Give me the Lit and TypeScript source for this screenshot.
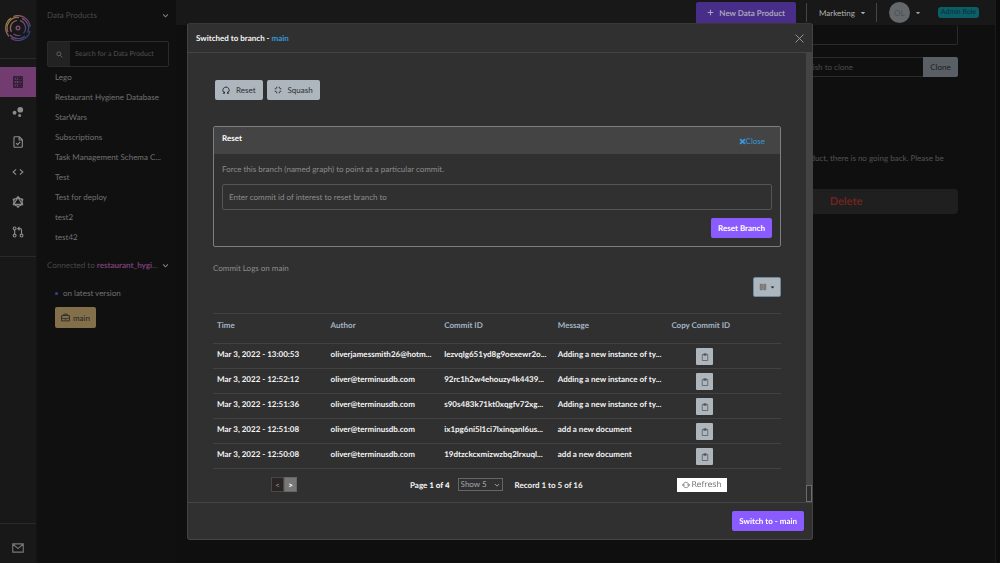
import { LitElement, html, css, svg } from "lit";
import { customElement, property } from "lit/decorators.js";

interface Commit {
  time: string;
  author: string;
  id: string;
  message: string;
}

const PRODUCTS = [
  "Lego",
  "Restaurant Hygiene Database",
  "StarWars",
  "Subscriptions",
  "Task Management Schema C...",
  "Test",
  "Test for deploy",
  "test2",
  "test42",
];

const COMMITS: Commit[] = [
  { time: "Mar 3, 2022 - 13:00:53", author: "oliverjamessmith26@hotm...", id: "lezvqlg651yd8g9oexewr2o...", message: "Adding a new instance of ty..." },
  { time: "Mar 3, 2022 - 12:52:12", author: "oliver@terminusdb.com", id: "92rc1h2w4ehouzy4k4439...", message: "Adding a new instance of ty..." },
  { time: "Mar 3, 2022 - 12:51:36", author: "oliver@terminusdb.com", id: "s90s483k71kt0xqgfv72xg...", message: "Adding a new instance of ty..." },
  { time: "Mar 3, 2022 - 12:51:08", author: "oliver@terminusdb.com", id: "ix1pg6ni5l1ci7lxinqanl6us...", message: "add a new document" },
  { time: "Mar 3, 2022 - 12:50:08", author: "oliver@terminusdb.com", id: "19dtzckcxmizwzbq2lrxuql...", message: "add a new document" },
];

const ICONS: Record<string, unknown> = {
  table: svg`<path d="M2.5 1.200h11v13.600h-11zM2.5 5.700h11M2.5 10.300h11M5 3.500h1.500M8 3.500h4M5 8h1.500M8 8h4M5 12.500h1.500M8 12.500h4"/>`,
  bubbles: svg`<g fill="currentColor" stroke="none"><circle cx="11" cy="5" r="3.8"/><circle cx="3.4" cy="9" r="2.6"/><circle cx="10.2" cy="12.8" r="2"/></g>`,
  doc: svg`<path d="M3.8 1h6l4 4v8.8a1.2 1.2 0 0 1-1.200 1.200H3.800a1.200 1.200 0 0 1-1.200-1.200V2.200A1.200 1.200 0 0 1 3.800 1zM9.500 1v4.300h4.200M5.500 9.500l2 2 3.400-3.600"/>`,
  code: svg`<path d="M5.500 4.500 1.500 8l4 3.500M10.500 4.500l4 3.500-4 3.500"/>`,
  graph: svg`<path d="M8 1.800l5.600 3.100v6.200L8 14.200l-5.600-3.100V4.900zM8 1.800l-5.600 9.300h11.200z"/><g fill="currentColor" stroke="none"><circle cx="8" cy="1.700" r="1.500"/><circle cx="13.600" cy="4.900" r="1.500"/><circle cx="13.600" cy="11.100" r="1.500"/><circle cx="8" cy="14.300" r="1.500"/><circle cx="2.400" cy="11.100" r="1.500"/><circle cx="2.400" cy="4.900" r="1.500"/></g>`,
  pull: svg`<circle cx="3.500" cy="3.300" r="1.900"/><circle cx="3.500" cy="12.700" r="1.900"/><circle cx="12.700" cy="12.700" r="1.900"/><path d="M3.500 5.200v5.600M12.700 10.800V5.300a1.800 1.800 0 0 0-1.800-1.800H8M10 1.200 7.700 3.500 10 5.800"/>`,
  mail: svg`<path d="M1 2.500h14v11H1zM1.500 3l6.500 5.800L14.500 3"/>`,
  search: svg`<circle cx="6.500" cy="6.500" r="4.500"/><path d="M10 10l4.500 4.500"/>`,
  chevron: svg`<path d="M2.500 5.500 8 11l5.500-5.500"/>`,
  caret: svg`<path d="M2 5h12l-6 6.500z" fill="currentColor" stroke="none"/>`,
  plus: svg`<path d="M8 1.500v13M1.500 8h13"/>`,
  close: svg`<path d="M1 1l14 14M15 1 1 15"/>`,
  cross: svg`<path d="M2.500 2.500l11 11M13.500 2.500l-11 11"/>`,
  briefcase: svg`<path d="M1 4.500h14v9.500H1zM5 4.500V2h6v2.500M1 8.500c4.500 2.500 9.500 2.500 14 0M8 9v2.500"/>`,
  undo: svg`<path d="M5 14.500H1.800M5 14.500V11.500M5 14A6.300 6.300 0 1 1 11 14M11 14.500h3.200M11 14.500v-3"/>`,
  squash: svg`<path d="M5.500 1.500v3M1.500 5.500h3M10.500 1.500v3M11.500 5.500h3M5.500 14.500v-3M1.500 10.500h3M10.500 14.500v-3M11.500 10.500h3"/>`,
  columns: svg`<path d="M2.500 2.500h4v11h-4zM9.500 2.500h4v11h-4z" fill="currentColor" fill-opacity="0.600"/>`,
  clipboard: svg`<path d="M5 3H2.500v12h11V3H11"/><path d="M5.500 1.500h5v3h-5z" fill="currentColor"/>`,
  refresh: svg`<path d="M2.600 6.500A5.600 5.600 0 0 1 13.300 6.500M13.400 9.500A5.600 5.600 0 0 1 2.700 9.500M11 7.300h4.600L13.400 10zM.5 8.700h4.600L2.600 6z"/>`,
};

@customElement("ui-icon")
export class UiIcon extends LitElement {
  @property() name = "";
  @property({ type: Number }) size = 10;
  @property({ type: Number }) weight = 1.5;

  static styles = css`
    :host { display: inline-flex; flex: none; }
    svg { display: block; fill: none; stroke: currentColor; }
  `;

  render() {
    return html`<svg viewBox="0 0 16 16" width=${this.size} height=${this.size} stroke-width=${this.weight} aria-hidden="true">${ICONS[this.name]}</svg>`;
  }
}

@customElement("app-root")
export class AppRoot extends LitElement {
  static styles = css`
    :host {
      display: block;
      min-height: 100vh;
      background: #0f0f0f;
      color: #707070;
      font: 8px/12px Lato, "Open Sans", sans-serif;
      text-rendering: geometricPrecision;
    }
    * { box-sizing: border-box; }
    button, input, select { font: inherit; color: inherit; margin: 0; padding: 0; border: 0; background: none; text-rendering: inherit; }
    button { display: inline-flex; align-items: center; justify-content: center; white-space: nowrap; cursor: pointer; }
    a { color: inherit; text-decoration: none; }
    h2, h3, p, ul { margin: 0; padding: 0; font-size: inherit; font-weight: inherit; list-style: none; }

    .shell { display: flex; height: 100vh; overflow: hidden; }

    .rail { flex: none; width: 37px; display: flex; flex-direction: column; background: #181818; border-right: 1px solid #141414; }
    .logo { height: 59px; padding: 15px 5px 0; border-bottom: 1px solid #2a2a2a; }
    .logo svg { display: block; }
    .rail ul { padding: 8px 0 9px; border-bottom: 1px solid #2a2a2a; }
    .rail li a { display: flex; height: 30px; align-items: center; justify-content: center; color: #8c8c8c; }
    .rail li a.active { background: #733c70; color: #1c1424; }
    .rail .mail { margin-top: auto; height: 40px; padding-bottom: 9px; display: flex; align-items: flex-end; justify-content: center; border-top: 1px solid #2a2a2a; color: #777; }

    .side { flex: none; width: 139px; padding: 9px 7px 0 10px; background: #101010; }
    .head { display: flex; justify-content: space-between; align-items: center; color: #484848; }
    .head ui-icon { color: #808080; }
    .search { display: flex; height: 26px; margin-top: 20px; border: 1px solid #2b2b2b; border-radius: 2px; }
    .search label { flex: none; width: 22px; display: flex; align-items: center; justify-content: center; background: #222; color: #686868; }
    .search input { flex: 1; min-width: 0; padding-left: 5px; font-size: 7px; }
    .search input::placeholder { color: #505050; opacity: 1; }
    .products li { height: 20px; padding: 4px 0 4px 8px; }
    .products a { display: block; white-space: nowrap; }
    .head b { color: #7a3f77; }
    .connected { margin-top: 12px; }
    .latest { margin-top: 16px; padding-left: 8px; display: flex; align-items: center; gap: 5px; }
    .dot { width: 3px; height: 3px; border-radius: 50%; background: #364486; }
    .branch { height: 21px; margin: 8px 0 0 8px; padding: 0 6px; gap: 3px; border-radius: 2px; background: #83704a; color: #262626; }

    .page { flex: 1; min-width: 0; display: flex; flex-direction: column; }
    .topbar { flex: none; height: 25px; display: flex; align-items: center; justify-content: flex-end; padding-right: 16px; background: #181818; }
    .new { height: 22px; padding: 0 11px; gap: 5px; border-radius: 2px; background: #482e88; color: #aaa3bd; font-weight: 700; }
    .rule { width: 1px; height: 19px; background: #454545; }
    .new + .rule { margin-left: 10px; }
    .team { margin: 0 10px 0 12px; gap: 5px; color: #b4b4b4; }
    .user { margin: 0 17px 0 12px; gap: 5px; color: #a0a0a0; }
    .avatar { width: 21px; height: 21px; border-radius: 50%; background: #65686b; color: #4c4f52; display: grid; place-items: center; }
    .role { height: 11px; padding: 0 3px; border-radius: 3px; background: #0b5f69; color: #0b2c32; font-size: 7px; line-height: 11px; }
    .content { padding: 0 37px 0 24px; display: flex; flex-direction: column; }
    .ghost { height: 20px; border: 1px solid #2b2b2b; border-top: 0; border-radius: 2px; }
    .clone { display: flex; height: 20px; margin-top: 12px; }
    .clone input { flex: 1; min-width: 0; padding-right: 70px; border: 1px solid #2b2b2b; border-right: 0; border-radius: 2px 0 0 2px; text-align: right; }
    .clone input::placeholder { color: #4c4c4c; opacity: 1; }
    .clone button { width: 35px; border-radius: 0 2px 2px 0; background: #5a5f65; color: #1c1c1c; }
    .danger { align-self: flex-end; width: 251px; margin-top: 75px; white-space: nowrap; color: #535353; }
    .delete { align-self: flex-end; width: 224px; height: 25px; margin-top: 13px; border-radius: 4px; background: #1f1f1f; color: #72241f; font-size: 11px; font-weight: 700; }
    .gutter { flex: none; width: 5px; background: #0b0b0b; border-left: 1px solid #1b1b1b; }

    .modal {
      position: fixed; top: 23px; left: 50%; width: 62.6%; transform: translateX(-50%);
      background: #303030; border: 1px solid #444; border-top-color: #383838; border-radius: 3px; color: #f4f4f4;
    }
    .mhead { display: flex; justify-content: space-between; align-items: center; height: 29px; padding: 0 8px; border-bottom: 1px solid #444; font-weight: 700; }
    .mhead span, .blue { color: #3498db; }
    .mhead button { color: #a8a8a8; }
    .mbody { display: flex; }
    .scroll { flex: none; width: 6px; display: flex; flex-direction: column; justify-content: flex-end; background: #444; }
    .thumb { height: 17px; background: #2c2c2c; border: 1px solid #6c6c6c; }
    .inner { flex: 1; min-width: 0; padding: 27px 25px 10px; }
    .tools { display: flex; gap: 4px; padding-left: 2px; }
    .grey { height: 20px; border-radius: 2px; background: #adb5bd; color: #303030; }
    .tools .grey { padding: 0 7px; gap: 6px; }
    .card { margin-top: 26px; border: 1px solid #7a7f83; border-radius: 2px; }
    .card header { display: flex; justify-content: space-between; height: 27px; padding: 5px 15px 0 8px; background: #444; font-weight: 700; color: #fff; }
    .card header button { height: 18px; font-weight: 400; color: #3498db; }
    .cbody { padding: 9px 8px 8px; display: flex; flex-direction: column; }
    .cbody label, .logs { color: #8c8c8c; }
    .cbody input { height: 26px; margin: 9px 0 8px; padding: 0 6px; border: 1px solid #555; border-radius: 2px; }
    .cbody input::placeholder { color: #8c8c8c; opacity: 1; }
    .violet { height: 20px; padding: 0 7px; border-radius: 2px; background: #8a5cff; color: #fff; font-weight: 700; align-self: flex-end; }
    .logs { margin-top: 15px; }
    .viewrow { display: flex; justify-content: flex-end; margin: 3px 0 16px; }
    .viewrow .grey { width: 28px; gap: 3px; border: 1px solid #6d8aa5; color: #666; }
    .viewrow .grey ui-icon + ui-icon { color: #222; }
    table { width: 100%; table-layout: fixed; border-spacing: 0; }
    th, td { padding: 0 4px; border-top: 1px solid #424242; text-align: left; white-space: nowrap; overflow: hidden; font-weight: 700; }
    th { height: 30px; padding-bottom: 8px; color: #a3b4c6; }
    td { height: 25px; padding-bottom: 4px; color: #f4f4f4; }
    tbody tr:last-child td { border-bottom: 1px solid #424242; height: 26px; }
    td.copy { padding: 0 0 0 29px; }
    td.copy button { width: 17px; height: 17px; padding-top: 2px; border-radius: 1px; background: #adb5bd; color: #555; vertical-align: middle; }
    .pager { display: flex; align-items: center; margin-top: 8px; padding-left: 58px; font-weight: 700; height: 15px; }
    .nav { display: flex; }
    .nav button { width: 13px; height: 15px; background: #777; border: 1px solid #666; color: #fff; font-weight: 700; }
    .nav button:disabled { background: #2b2424; border-color: #484848; color: #777; }
    .pager .count { margin-left: 113px; }
    .size { display: grid; align-items: center; margin-left: 8px; width: 45px; height: 13px; border: 1px solid #666; color: #a0a8b2; font-weight: 400; }
    .size select { grid-area: 1 / 1; width: 100%; height: 11px; padding-left: 2px; appearance: none; line-height: 11px; }
    .size ui-icon { grid-area: 1 / 1; justify-self: end; padding-right: 2px; pointer-events: none; }
    .record { margin-left: 12px; }
    .refresh { margin-left: auto; margin-right: 54px; width: 50px; height: 14px; gap: 1px; background: #fff; color: #777; font: 8px/12px "DejaVu Sans", sans-serif; }
    .mfoot { display: flex; justify-content: flex-end; padding: 8px; border-top: 1px solid #444; }
  `;

  private rail = ["table", "bubbles", "doc", "code", "graph", "pull"];

  render() {
    return html`
      <div class="shell">
        <nav class="rail" aria-label="Main">
          <div class="logo">
            <svg viewBox="0 0 26 26" width="26" height="26" fill="none" stroke-width="1.2" aria-hidden="true">
              <defs>
                <linearGradient id="ring" gradientUnits="userSpaceOnUse" x1="3" y1="5" x2="23" y2="21">
                  <stop offset="0" stop-color="#a08444" /><stop offset="0.5" stop-color="#7c4874" /><stop offset="1" stop-color="#2c4484" />
                </linearGradient>
              </defs>
              <g stroke="url(#ring)">
                <path d="M4 21.500A12.300 12.300 0 0 1 6 3M8.500 1.500A12.300 12.300 0 0 1 25.200 12M25 16A12.300 12.300 0 0 1 6 23.200" />
                <path d="M3 17A10.400 10.400 0 0 1 14 2.600M17 3.400A10.400 10.400 0 0 1 22.600 17.500M20 21A10.400 10.400 0 0 1 5 20" />
                <path d="M6.500 17A7.600 7.600 0 0 1 12 5.500M15 5.700A7.600 7.600 0 0 1 18.500 18.200M15.500 20.200A7.600 7.600 0 0 1 8.500 19" />
                <circle cx="13" cy="13" r="1.800" stroke-width="1.400" />
              </g>
            </svg>
          </div>
          <ul>
            ${this.rail.map((n, i) => html`<li><a href="#${n}" aria-label=${n} class=${i ? "" : "active"}><ui-icon name=${n} size="12"></ui-icon></a></li>`)}
          </ul>
          <a class="mail" href="#mail" aria-label="Mail"><ui-icon name="mail" size="12"></ui-icon></a>
        </nav>

        <aside class="side">
          <div class="head"><span>Data Products</span><ui-icon name="chevron" size="7" weight="2.5"></ui-icon></div>
          <div class="search">
            <label for="find"><ui-icon name="search" size="7" weight="2"></ui-icon></label>
            <input id="find" aria-label="Search" placeholder="Search for a Data Product" />
          </div>
          <ul class="products">${PRODUCTS.map((p) => html`<li><a href="#product">${p}</a></li>`)}</ul>
          <div class="head connected"><span>Connected to <b>restaurant_hygi</b>...</span><ui-icon name="chevron" size="7" weight="2.5"></ui-icon></div>
          <div class="latest"><i class="dot"></i>on latest version</div>
          <button class="branch"><ui-icon name="briefcase" size="9"></ui-icon>main</button>
        </aside>

        <div class="page">
          <div class="topbar">
            <button class="new"><ui-icon name="plus" size="7" weight="2.5"></ui-icon>New Data Product</button>
            <i class="rule"></i>
            <button class="team">Marketing<ui-icon name="caret" size="6"></ui-icon></button>
            <i class="rule"></i>
            <button class="user"><span class="avatar">OL</span><ui-icon name="caret" size="6"></ui-icon></button>
            <span class="role">Admin Role</span>
          </div>
          <div class="content">
            <div class="ghost"></div>
            <div class="clone">
              <input aria-label="Clone source" placeholder="Enter the url of the data product you wish to clone" />
              <button>Clone</button>
            </div>
            <p class="danger">Once you delete this data product, there is no going back. Please be<br />certain.</p>
            <button class="delete">Delete</button>
          </div>
        </div>
        <div class="gutter"></div>
      </div>

      <section class="modal" role="dialog" aria-modal="true">
        <div class="mhead">
          <h2>Switched to branch - <span>main</span></h2>
          <button aria-label="Close dialog"><ui-icon name="close" size="9"></ui-icon></button>
        </div>
        <div class="mbody">
          <div class="inner">
            <div class="tools">
              <button class="grey"><ui-icon name="undo" size="8" weight="2"></ui-icon>Reset</button>
              <button class="grey"><ui-icon name="squash" size="8" weight="2"></ui-icon>Squash</button>
            </div>
            <div class="card">
              <header><h3>Reset</h3><button><ui-icon name="cross" size="7" weight="4.5"></ui-icon>Close</button></header>
              <div class="cbody">
                <label for="commit">Force this branch (named graph) to point at a particular commit.</label>
                <input id="commit" placeholder="Enter commit id of interest to reset branch to" />
                <button class="violet">Reset Branch</button>
              </div>
            </div>
            <p class="logs">Commit Logs on main</p>
            <div class="viewrow">
              <button class="grey" aria-label="Columns"><ui-icon name="columns" size="8"></ui-icon><ui-icon name="caret" size="5"></ui-icon></button>
            </div>
            <table>
              <thead><tr><th>Time</th><th>Author</th><th>Commit ID</th><th>Message</th><th>Copy Commit ID</th></tr></thead>
              <tbody>
                ${COMMITS.map((c) => html`<tr>
                  <td>${c.time}</td><td>${c.author}</td><td>${c.id}</td><td>${c.message}</td>
                  <td class="copy"><button aria-label="Copy commit ID"><ui-icon name="clipboard" size="8"></ui-icon></button></td>
                </tr>`)}
              </tbody>
            </table>
            <div class="pager">
              <div class="nav"><button disabled>&lt;</button><button>&gt;</button></div>
              <span class="count">Page <b>1 of 4</b></span>
              <div class="size">
                <select aria-label="Rows per page"><option>Show 5</option></select>
                <ui-icon name="chevron" size="6" weight="2.5"></ui-icon>
              </div>
              <span class="record">Record 1 to 5 of 16</span>
              <button class="refresh"><ui-icon name="refresh" size="8"></ui-icon>Refresh</button>
            </div>
          </div>
          <div class="scroll"><div class="thumb"></div></div>
        </div>
        <div class="mfoot"><button class="violet">Switch to - main</button></div>
      </section>
    `;
  }
}
